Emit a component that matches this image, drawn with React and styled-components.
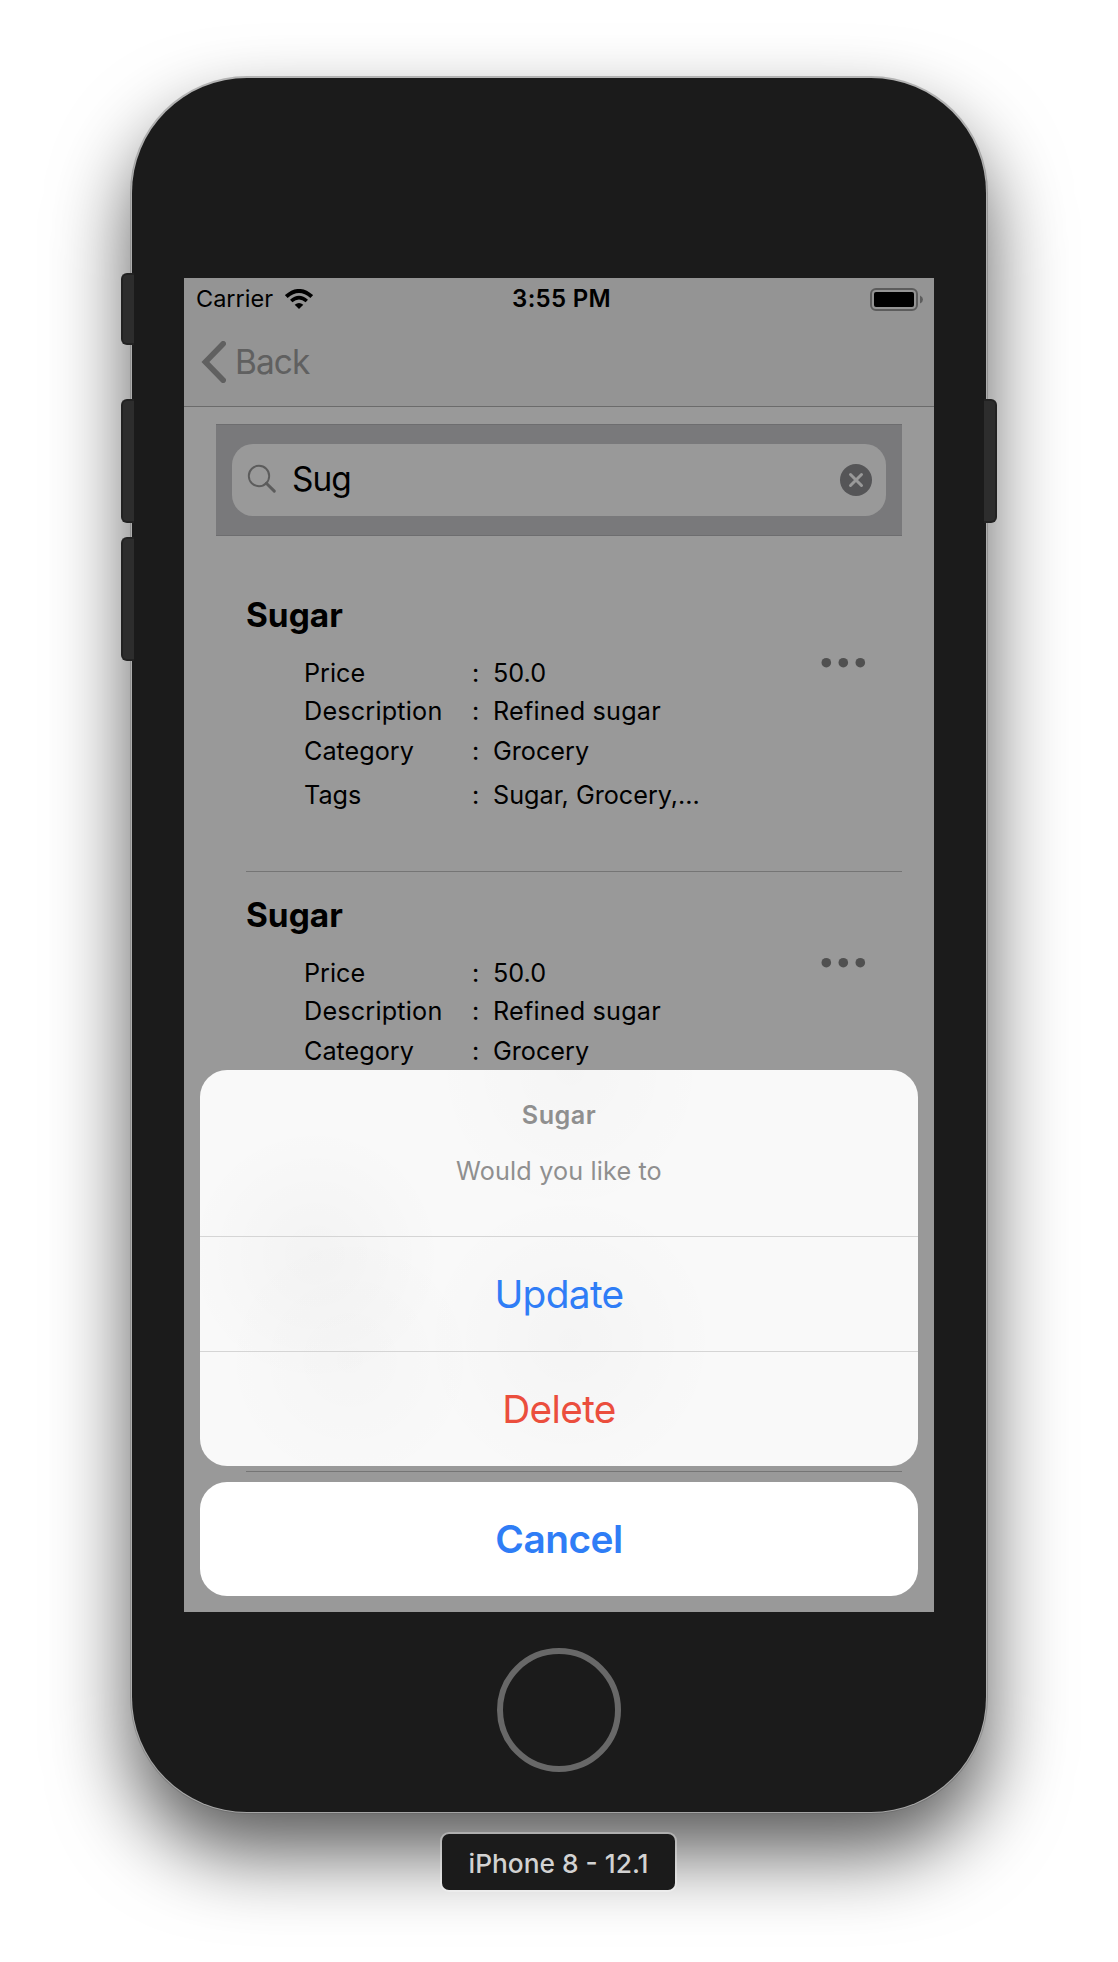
import React from "react";
import styled, { createGlobalStyle } from "styled-components";

const GlobalStyle = createGlobalStyle`
  * { box-sizing: border-box; }
  body {
    margin: 0;
    background: #fff;
    font-family: Inter, "Liberation Sans", sans-serif;
    color: #000;
  }
`;

const Stage = styled.main`
  display: flex;
  flex-direction: column;
  align-items: center;
  width: 1118px;
  height: 1962px;
  padding-top: 78px;
  overflow: hidden;
`;

const Phone = styled.div`
  position: relative;
  display: flex;
  flex-direction: column;
  align-items: center;
  flex: none;
  width: 854px;
  height: 1734px;
  padding-top: 200px;
  border-radius: 115px;
  background: #1b1b1b;
  box-shadow:
    0 0 0 1px rgba(180, 180, 180, 0.8),
    0 0 0 2px rgba(100, 100, 100, 0.4),
    0 40px 80px rgba(0, 0, 0, 0.66);
`;

const SideButton = styled.i`
  position: absolute;
  top: ${(p) => p.$top}px;
  ${(p) => p.$side}: -11px;
  width: 13px;
  height: ${(p) => p.$height}px;
  background: #2d2d2d;
  border: 2px solid #222;
  border-width: ${(p) => (p.$side === "left" ? "2px 0 2px 2px" : "2px 2px 2px 0")};
  border-radius: ${(p) => (p.$side === "left" ? "6px 0 0 6px" : "0 6px 6px 0")};
`;

const Screen = styled.section`
  position: relative;
  display: flex;
  flex-direction: column;
  flex: none;
  width: 750px;
  height: 1334px;
  overflow: hidden;
  background: #999;
`;

const TopBar = styled.header`
  flex: none;
  height: 129px;
  background: #949494;
  border-bottom: 1px solid #6b6b6b;
`;

const StatusBar = styled.div`
  display: grid;
  grid-template-columns: 1fr auto 1fr;
  align-items: center;
  height: 40px;
  padding: 0 11px 0 12px;
  font-size: 23.5px;
  line-height: 42px;
`;

const Carrier = styled.div`
  display: flex;
  align-items: center;
  gap: 12px;
`;

const Time = styled.span`
  font-size: 24px;
  font-weight: 600;
  letter-spacing: 0.3px;
  padding-left: 4px;
`;

const BatteryIcon = styled.svg`
  justify-self: end;
`;

const BackButton = styled.button`
  display: flex;
  align-items: center;
  gap: 9px;
  height: 88px;
  padding: 0 0 0 17px;
  border: 0;
  background: none;
  color: #606060;
  font: 400 33.4px/88px Inter, sans-serif;
  letter-spacing: -0.9px;
`;

const SearchBar = styled.div`
  flex: none;
  height: 112px;
  margin: 17px 32px 0;
  padding: 19px 16px;
  background: #79797b;
  border: 1px solid #6d6d6f;
  border-width: 1px 0;
`;

const SearchField = styled.div`
  display: flex;
  align-items: center;
  height: 72px;
  padding: 0 14px;
  border-radius: 21px;
  background: #999;
`;

const Query = styled.span`
  flex: 1;
  margin-left: 14px;
  font-size: 33.4px;
  line-height: 70px;
  height: 72px;
  letter-spacing: -0.9px;
`;

const List = styled.div`
  flex: none;
  margin: 36px 32px 0 62px;
`;

const Item = styled.article`
  display: flex;
  justify-content: space-between;
  height: 300px;
  padding-top: 23px;
  border-bottom: 1px solid #757575;
`;

const ItemTitle = styled.h2`
  margin: 0 0 19px;
  font-size: 33.4px;
  font-weight: 700;
  line-height: 40px;
`;

const Field = styled.div`
  display: grid;
  grid-template-columns: 168px 21px 1fr;
  height: ${(p) => p.$height}px;
  padding-left: 58px;
  font-size: 25.2px;
  line-height: ${(p) => p.$height}px;
`;

const Word = styled.span`
  letter-spacing: ${(p) => p.$track || 0}px;
  white-space: nowrap;
`;

const MoreIcon = styled.svg`
  flex: none;
  margin: 59px 36px 0 0;
`;

const SheetStack = styled.div`
  position: absolute;
  inset: 792px 16px 16px;
  display: flex;
  flex-direction: column;
  gap: 16px;
`;

const Sheet = styled.div`
  border-radius: 27px;
  overflow: hidden;
  background:
    radial-gradient(circle at 115px 185px, rgba(0, 0, 0, 0.022), transparent 130px),
    radial-gradient(circle at 150px 290px, rgba(0, 0, 0, 0.016), transparent 130px),
    radial-gradient(circle at 370px 270px, rgba(0, 0, 0, 0.018), transparent 150px),
    radial-gradient(ellipse at 370px 0, rgba(0, 0, 0, 0.016), transparent 140px),
    #f9f9f9;
`;

const SheetHeader = styled.div`
  height: 166px;
  padding-top: 17px;
  text-align: center;
  color: #8f8f8f;
  font-size: 25.2px;
  line-height: 56px;
`;

const SheetTitle = styled.div`
  font-weight: 600;
  letter-spacing: 0.45px;
`;

const SheetMessage = styled.div`
  letter-spacing: 0.15px;
`;

const Action = styled.button`
  display: block;
  width: 100%;
  height: ${(p) => (p.$standalone ? 114 : 115)}px;
  padding: 0;
  border: 0;
  border-top: ${(p) => (p.$standalone ? "0" : "1px solid #d5d5d5")};
  border-radius: ${(p) => (p.$standalone ? 27 : 0)}px;
  background: ${(p) => (p.$standalone ? "#fff" : "none")};
  color: ${(p) => (p.$danger ? "#eb4e3d" : "#2f7df6")};
  font: ${(p) => (p.$standalone ? 600 : 400)} 38.8px/114px Inter, sans-serif;
  letter-spacing: ${(p) => (p.$standalone ? -0.5 : -0.65)}px;
`;

const HomeButton = styled.div`
  width: 124px;
  height: 124px;
  margin-top: 36px;
  border: 6px solid #686868;
  border-radius: 50%;
`;

const DeviceLabel = styled.div`
  position: relative;
  flex: none;
  width: 233px;
  height: 56px;
  margin: 22px 0 0 -1px;
  border-radius: 7px;
  background: #1b1b1b;
  box-shadow: 0 0 0 2px rgba(255, 255, 255, 0.3);
  color: #d2d2d2;
  font-size: 26.3px;
  font-weight: 500;
  line-height: 59px;
  text-align: center;
`;

const sideButtons = [
  { side: "left", top: 195, height: 72 },
  { side: "left", top: 321, height: 124 },
  { side: "left", top: 459, height: 124 },
  { side: "right", top: 321, height: 124 },
];

const fields = [
  { label: "Price", value: "50.0", height: 38 },
  { label: "Description", value: "Refined sugar", height: 38, track: 0.2 },
  { label: "Category", value: "Grocery", height: 42 },
  { label: "Tags", value: "Sugar, Grocery,...", height: 46 },
];

// Rows behind the action sheet only carry the fields that stay in view.
const products = [
  { name: "Sugar", visible: 4 },
  { name: "Sugar", visible: 3 },
];

function Wifi() {
  return (
    <svg width="28" height="20" viewBox="0 0 28 20" fill="none" stroke="#000">
      <path d="M1.3 7.6Q14-3.6 26.7 7.6" strokeWidth="4" />
      <path d="M6.2 12Q14 5.4 21.8 12" strokeWidth="3.6" />
      <path d="M14 20l-4.3-4.3Q14 12.2 18.3 15.7z" fill="#000" stroke="none" />
    </svg>
  );
}

function Battery() {
  return (
    <BatteryIcon width="53" height="23" viewBox="0 0 53 23">
      <rect x="1" y="1" width="46" height="21" rx="5" fill="none" stroke="#5c5c5c" strokeWidth="2" />
      <rect x="4" y="4" width="40" height="15" rx="2" />
      <path d="M50 7.5q3 1.3 3 4t-3 4z" fill="#5c5c5c" />
    </BatteryIcon>
  );
}

function Product({ name, visible }) {
  return (
    <Item>
      <div>
        <ItemTitle>{name}</ItemTitle>
        {fields.slice(0, visible).map((f) => (
          <Field key={f.label} $height={f.height}>
            <Word $track={f.track}>{f.label}</Word>
            <Word>:</Word>
            <Word $track={f.track}>{f.value}</Word>
          </Field>
        ))}
      </div>
      <MoreIcon width="46" height="18" viewBox="0 0 46 18" fill="#505050">
        <circle cx="6.3" cy="8.7" r="4.8" />
        <circle cx="23.3" cy="8.7" r="4.8" />
        <circle cx="40.3" cy="8.7" r="4.8" />
      </MoreIcon>
    </Item>
  );
}

export default function App() {
  return (
    <Stage>
      <GlobalStyle />
      <Phone>
        {sideButtons.map((b) => (
          <SideButton key={b.side + b.top} $side={b.side} $top={b.top} $height={b.height} />
        ))}
        <Screen>
          <TopBar>
            <StatusBar>
              <Carrier>
                Carrier
                <Wifi />
              </Carrier>
              <Time>3:55 PM</Time>
              <Battery />
            </StatusBar>
            <BackButton>
              <svg width="25" height="42" viewBox="0 0 25 42" fill="none" stroke="#606060" strokeWidth="5.6" strokeLinecap="round">
                <path d="M22.2 2.8L4.4 21L22.2 39.2" />
              </svg>
              Back
            </BackButton>
          </TopBar>
          <SearchBar>
            <SearchField>
              <svg width="32" height="32" viewBox="0 0 32 32" fill="none" stroke="#5c5c5c">
                <circle cx="13" cy="12" r="10.2" strokeWidth="1.9" />
                <path d="M20.3 19.3l8 7.8" strokeWidth="3" strokeLinecap="round" />
              </svg>
              <Query>Sug</Query>
              <svg width="32" height="32" viewBox="0 0 32 32">
                <circle cx="16" cy="16" r="16" fill="#555557" />
                <path d="M10.5 10.5l11 11M21.5 10.5l-11 11" stroke="#999" strokeWidth="3" strokeLinecap="round" />
              </svg>
            </SearchField>
          </SearchBar>
          <List>
            {products.map((p, i) => (
              <Product key={i} name={p.name} visible={p.visible} />
            ))}
            <Item />
          </List>
          <SheetStack>
            <Sheet>
              <SheetHeader>
                <SheetTitle>Sugar</SheetTitle>
                <SheetMessage>Would you like to</SheetMessage>
              </SheetHeader>
              <Action>Update</Action>
              <Action $danger>Delete</Action>
            </Sheet>
            <Action $standalone>Cancel</Action>
          </SheetStack>
        </Screen>
        <HomeButton />
      </Phone>
      <DeviceLabel>iPhone 8 - 12.1</DeviceLabel>
    </Stage>
  );
}
